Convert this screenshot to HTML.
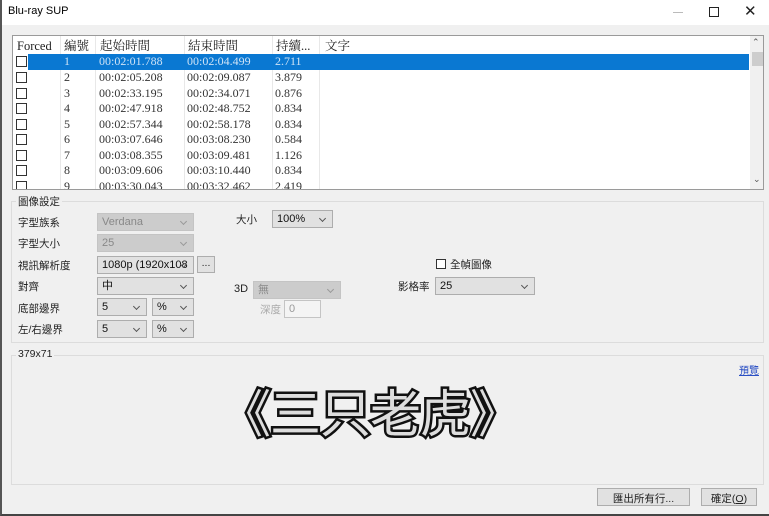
<!DOCTYPE html>
<html><head><meta charset="utf-8"><style>
*{box-sizing:border-box;margin:0;padding:0}
body{width:769px;height:516px;background:#f0f0f0;position:relative;overflow:hidden;font-family:"Liberation Sans","Noto Sans CJK TC",sans-serif;font-size:11px;color:#000}
.a{position:absolute}
.win{left:0;top:0;width:769px;height:516px;border-left:2px solid #555;border-bottom:2px solid #444}
.title{left:0;top:0;width:769px;height:25px;background:#fff}
.tbl{left:12px;top:35px;width:752px;height:155px;background:#fff;border:1px solid #9a9a9a;overflow:hidden}
.row{position:absolute;left:0;height:15.5px;width:737px;font-family:"Liberation Serif","Noto Serif CJK SC",serif;font-size:12px;color:#333;line-height:15px}
.row span{position:absolute;top:0}
.hdr{font-size:12.5px;line-height:18px;color:#222}
.cb{position:absolute;left:3px;top:2px;width:11px;height:11px;border:1px solid #333;background:#fff}
.vl{position:absolute;top:0;width:1px;height:155px;background:#e8e8e8}
.grp{border:1px solid #dcdcdc}
.lbl{font-size:10.5px;color:#222}
.dd{position:absolute;height:18px;background:#e1e1e1;border:1px solid #adadad;font-size:11px;padding:2px 0 0 4px;color:#111;line-height:13px}
.dd.dis{background:#ccc;border-color:#c4c4c4;color:#888}
.dd:after{content:"";position:absolute;right:7px;top:5px;width:4px;height:4px;border-right:1px solid #555;border-bottom:1px solid #555;transform:rotate(45deg)}
.dd.dis:after{border-color:#999}
.btn{position:absolute;height:18px;background:#e1e1e1;border:1px solid #adadad;text-align:center;font-size:10.5px;padding-top:2px;color:#222}
.big{left:220px;top:375px;font-size:51px;font-weight:normal;font-family:"Noto Sans CJK SC",sans-serif;color:#ddd;-webkit-text-stroke:5px #111;paint-order:stroke fill;letter-spacing:-1px;line-height:70px}
</style></head><body>
<div class="a title"></div>
<div class="a" style="left:8px;top:5px;font-size:11px">Blu-ray SUP</div>
<div class="a" style="left:673px;top:12px;width:10px;height:1px;background:#bbb"></div>
<div class="a" style="left:709px;top:7px;width:10px;height:10px;border:1px solid #222"></div>
<div class="a" style="left:744px;top:2px;font-size:15px;color:#222">✕</div>

<div class="a tbl">
 <div class="vl" style="left:47px"></div><div class="vl" style="left:82px"></div><div class="vl" style="left:171px"></div><div class="vl" style="left:259px"></div><div class="vl" style="left:306px"></div>
 <div class="row hdr" style="top:1px"><span style="left:4px">Forced</span><span style="left:51px">編號</span><span style="left:87px">起始時間</span><span style="left:175px">結束時間</span><span style="left:263px">持續...</span><span style="left:312px">文字</span></div>
 <div class="a" style="left:15px;top:18px;width:721px;height:16px;background:#0a78d2"></div>
 <div class="row" style="top:18px;color:#cfe3f6"><div class="cb"></div><span style="left:51px">1</span><span style="left:86px">00:02:01.788</span><span style="left:174px">00:02:04.499</span><span style="left:262px">2.711</span></div>
 <div class="row" style="top:34px"><div class="cb"></div><span style="left:51px">2</span><span style="left:86px">00:02:05.208</span><span style="left:174px">00:02:09.087</span><span style="left:262px">3.879</span></div>
 <div class="row" style="top:49.5px"><div class="cb"></div><span style="left:51px">3</span><span style="left:86px">00:02:33.195</span><span style="left:174px">00:02:34.071</span><span style="left:262px">0.876</span></div>
 <div class="row" style="top:65px"><div class="cb"></div><span style="left:51px">4</span><span style="left:86px">00:02:47.918</span><span style="left:174px">00:02:48.752</span><span style="left:262px">0.834</span></div>
 <div class="row" style="top:80.5px"><div class="cb"></div><span style="left:51px">5</span><span style="left:86px">00:02:57.344</span><span style="left:174px">00:02:58.178</span><span style="left:262px">0.834</span></div>
 <div class="row" style="top:96px"><div class="cb"></div><span style="left:51px">6</span><span style="left:86px">00:03:07.646</span><span style="left:174px">00:03:08.230</span><span style="left:262px">0.584</span></div>
 <div class="row" style="top:111.5px"><div class="cb"></div><span style="left:51px">7</span><span style="left:86px">00:03:08.355</span><span style="left:174px">00:03:09.481</span><span style="left:262px">1.126</span></div>
 <div class="row" style="top:127px"><div class="cb"></div><span style="left:51px">8</span><span style="left:86px">00:03:09.606</span><span style="left:174px">00:03:10.440</span><span style="left:262px">0.834</span></div>
 <div class="row" style="top:142.5px"><div class="cb"></div><span style="left:51px">9</span><span style="left:86px">00:03:30.043</span><span style="left:174px">00:03:32.462</span><span style="left:262px">2.419</span></div>
 <div class="a" style="left:737px;top:0;width:14px;height:154px;background:#f0f0f0"></div>
 <div class="a" style="left:739px;top:1px;font-size:9px;color:#555">⌃</div>
 <div class="a" style="left:739px;top:16px;width:11px;height:14px;background:#cdcdcd"></div>
 <div class="a" style="left:740px;top:138px;font-size:9px;color:#555">⌄</div>
</div>

<div class="a grp" style="left:11px;top:201px;width:753px;height:142px"></div>
<div class="a lbl" style="left:16px;top:194px;background:#f0f0f0;padding:0 2px">圖像設定</div>
<div class="a lbl" style="left:18px;top:215px">字型族系</div>
<div class="a lbl" style="left:18px;top:236px">字型大小</div>
<div class="a lbl" style="left:18px;top:258px">視訊解析度</div>
<div class="a lbl" style="left:18px;top:279px">對齊</div>
<div class="a lbl" style="left:18px;top:301px">底部邊界</div>
<div class="a lbl" style="left:18px;top:322px">左/右邊界</div>
<div class="dd dis" style="left:97px;top:213px;width:97px">Verdana</div>
<div class="dd dis" style="left:97px;top:234px;width:97px">25</div>
<div class="dd" style="left:97px;top:256px;width:97px">1080p (1920x108</div>
<div class="btn" style="left:197px;top:256px;width:18px;height:17px;padding:0">...</div>
<div class="dd" style="left:97px;top:277px;width:97px">中</div>
<div class="dd" style="left:97px;top:298px;width:50px">5</div>
<div class="dd" style="left:152px;top:298px;width:42px">%</div>
<div class="dd" style="left:97px;top:320px;width:50px">5</div>
<div class="dd" style="left:152px;top:320px;width:42px">%</div>
<div class="a lbl" style="left:236px;top:212px">大小</div>
<div class="dd" style="left:272px;top:210px;width:61px">100%</div>
<div class="a lbl" style="left:234px;top:283px;font-size:11px">3D</div>
<div class="dd dis" style="left:253px;top:281px;width:88px">無</div>
<div class="a lbl" style="left:260px;top:302px;color:#aaa">深度</div>
<div class="a" style="left:284px;top:300px;width:37px;height:18px;background:#f4f4f4;border:1px solid #c4c4c4;color:#999;font-size:11px;padding:2px 4px">0</div>
<div class="a" style="left:436px;top:259px;width:10px;height:10px;border:1px solid #333;background:#fff"></div>
<div class="a lbl" style="left:450px;top:257px">全幀圖像</div>
<div class="a lbl" style="left:398px;top:279px">影格率</div>
<div class="dd" style="left:435px;top:277px;width:100px">25</div>

<div class="a grp" style="left:11px;top:355px;width:753px;height:130px"></div>
<div class="a lbl" style="left:16px;top:348px;background:#f0f0f0;padding:0 2px">379x71</div>
<div class="a" style="left:739px;top:362px;font-size:10px;color:#2a4fc4;text-decoration:underline">預覽</div>
<div class="a big">《三只老虎》</div>

<div class="btn" style="left:597px;top:488px;width:93px">匯出所有行...</div>
<div class="btn" style="left:701px;top:488px;width:56px">確定(<u>O</u>)</div>
<div class="a win"></div>
</body></html>
